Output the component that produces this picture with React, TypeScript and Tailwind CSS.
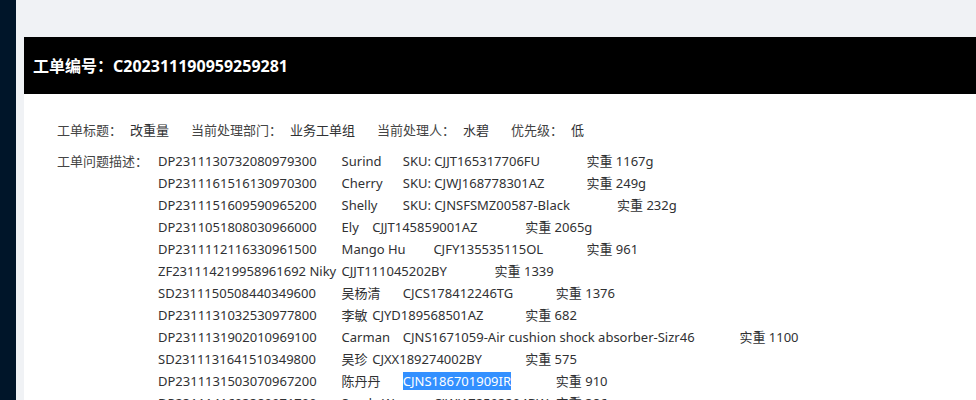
import React from 'react';

type Line = { parts: string[]; mark?: number };

// Description lines are tab separated, like the pasted ticket text.
const lines: Line[] = [
  { parts: ['DP2311130732080979300\tSurind\tSKU: CJJT165317706FU\t\t实重 1167g'] },
  { parts: ['DP2311161516130970300\tCherry\tSKU: CJWJ168778301AZ\t\t实重 249g'] },
  { parts: ['DP2311151609590965200\tShelly\tSKU: CJNSFSMZ00587-Black\t\t实重 232g'] },
  { parts: ['DP2311051808030966000\tEly\tCJJT145859001AZ\t\t实重 2065g'] },
  { parts: ['DP2311112116330961500\tMango Hu\tCJFY135535115OL\t\t实重 961'] },
  { parts: ['ZF231114219958961692 Niky\tCJJT111045202BY\t\t实重 1339'] },
  { parts: ['SD2311150508440349600\t吴杨清\tCJCS178412246TG\t\t实重 1376'] },
  { parts: ['DP2311131032530977800\t李敏\tCJYD189568501AZ\t\t实重 682'] },
  { parts: ['DP2311131902010969100\tCarman\tCJNS1671059-Air cushion shock absorber-Sizr46\t\t实重 1100'] },
  { parts: ['SD2311131641510349800\t吴珍\tCJXX189274002BY\t\t实重 575'] },
  { parts: ['DP2311131503070967200\t陈丹丹\t', 'CJNS186701909IR', '\t\t实重 910'], mark: 1 },
  { parts: ['DP2311141603380971700\tSandy W\t\tCJWJ172593304BW\t实重 386'] },
  { parts: ['DP2311140925160968400\tLinda\tCJJT160327811AZ\t\t实重 1520'] },
];

const meta = [
  { label: '工单标题：', value: '改重量' },
  { label: '当前处理部门：', value: '业务工单组' },
  { label: '当前处理人：', value: '水碧' },
  { label: '优先级：', value: '低' },
];

export default function App() {
  return (
    <div className="flex min-h-[400px] font-['Noto_Sans','Noto_Sans_CJK_SC',sans-serif] text-[13px] text-[#303133]">
      <aside className="w-4 shrink-0 bg-[#001529]" />

      <main className="flex-1 bg-[#f0f2f5] pt-[37px] pl-2">
        <div className="bg-white min-h-[363px]">
          <div className="h-[57px] bg-black flex items-center pl-[9px]">
            <h1 className="text-white text-base font-bold">工单编号：C202311190959259281</h1>
          </div>

          <div className="pl-[33px] pt-[25px]">
            {/* Ticket summary */}
            <div className="flex gap-x-[22px] leading-[22px] mb-[9px]">
              {meta.map((m) => (
                <div key={m.label} className="flex gap-2">
                  <span className="text-[#444]">{m.label}</span>
                  <span>{m.value}</span>
                </div>
              ))}
            </div>

            {/* Ticket description */}
            <div className="flex leading-[22px]">
              <span className="w-[101px] shrink-0 text-[#444]">工单问题描述：</span>
              <div className="whitespace-pre [tab-size:30.6px]">
                {lines.map((line, i) => (
                  <div key={i}>
                    {line.parts.map((p, j) =>
                      j === line.mark ? (
                        <span key={j} className="bg-[#3390ff] text-white">{p}</span>
                      ) : (
                        <span key={j}>{p}</span>
                      )
                    )}
                  </div>
                ))}
              </div>
            </div>
          </div>
        </div>
      </main>
    </div>
  );
}
